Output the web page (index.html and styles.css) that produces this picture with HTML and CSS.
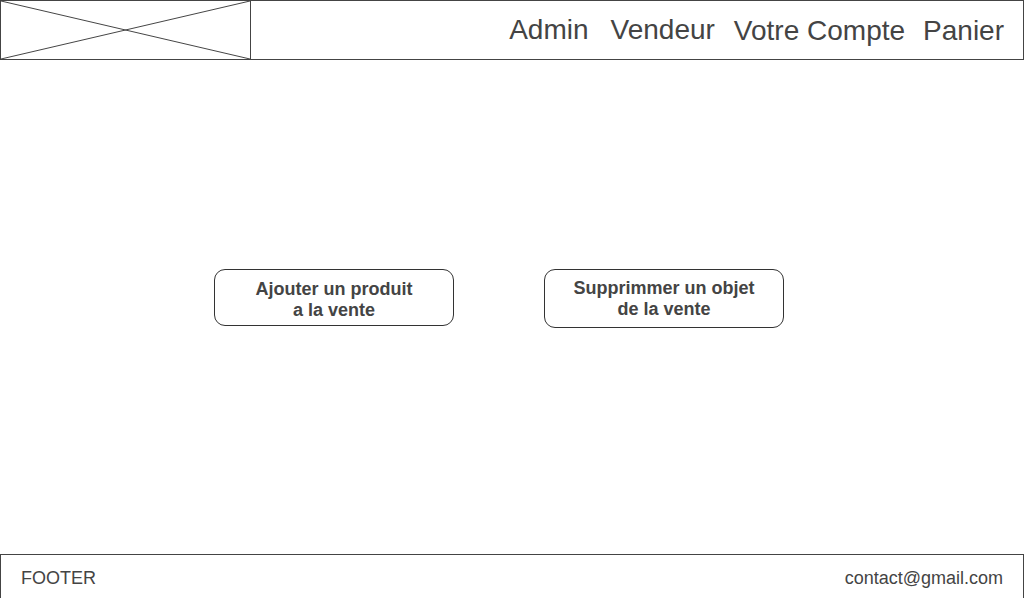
FILE: index.html
```html
<!DOCTYPE html>
<html lang="fr">
<head>
<meta charset="utf-8">
<title>Vendeur</title>
<link rel="stylesheet" href="styles.css">
</head>
<body>
<div class="page">
  <header class="header">
    <div class="logo">
      <svg class="logo-x" width="250" height="58" viewBox="0 0 250 58" preserveAspectRatio="none">
        <line x1="0" y1="0" x2="250" y2="58" stroke="#444" stroke-width="1"/>
        <line x1="0" y1="58" x2="250" y2="0" stroke="#444" stroke-width="1"/>
      </svg>
    </div>
    <nav class="nav">
      <a class="nav-item nav-admin">Admin</a>
      <a class="nav-item nav-vendeur">Vendeur</a>
      <a class="nav-item nav-compte">Votre Compte</a>
      <a class="nav-item nav-panier">Panier</a>
    </nav>
  </header>
  <main class="main">
    <button class="btn btn-add">Ajouter un produit<br>a la vente</button>
    <button class="btn btn-del">Supprimmer un objet<br>de la vente</button>
  </main>
  <footer class="footer">
    <span class="footer-label">FOOTER</span>
    <span class="footer-mail">contact@gmail.com</span>
  </footer>
</div>
</body>
</html>
```
FILE: styles.css
```css
html, body {
  margin: 0;
  padding: 0;
  background: #fff;
  overflow: hidden;
}
body {
  font-family: "Liberation Sans", Arial, sans-serif;
  color: #444;
}
.page {
  width: 1024px;
  height: 600px;
  display: flex;
  flex-direction: column;
}
.header {
  box-sizing: border-box;
  height: 60px;
  border: 1px solid #444;
  display: flex;
  align-items: stretch;
}
.logo {
  width: 249px;
  border-right: 1px solid #444;
  display: flex;
}
.logo-x {
  display: block;
  width: 249px;
  height: 58px;
}
.nav {
  flex: 1;
  display: flex;
  justify-content: flex-end;
  align-items: flex-start;
  padding-right: 19px;
}
.nav-item {
  font-size: 28px;
  line-height: 32px;
  color: #444;
  text-decoration: none;
}
.nav-admin { margin-top: 13px; }
.nav-vendeur { margin-top: 13px; margin-left: 22px; }
.nav-compte { margin-top: 14px; margin-left: 19px; }
.nav-panier { margin-top: 14px; margin-left: 18px; }
.main {
  flex: 1;
  display: flex;
  align-items: flex-start;
  padding-top: 209px;
  padding-left: 214px;
  gap: 90px;
}
.btn {
  box-sizing: border-box;
  width: 240px;
  background: #fff;
  border: 1px solid #333;
  border-radius: 11px;
  font-family: "Liberation Sans", Arial, sans-serif;
  font-weight: bold;
  font-size: 18px;
  line-height: 21px;
  color: #444;
  padding: 0;
  margin: 0;
  display: flex;
  align-items: center;
  justify-content: center;
  text-align: center;
}
.btn-add { height: 57px; padding-top: 4px; }
.btn-del { height: 59px; }
.footer {
  box-sizing: border-box;
  height: 46px;
  flex: none;
  border: 1px solid #444;
  display: flex;
  align-items: flex-start;
  justify-content: space-between;
  padding: 12px 20px 0 20px;
  font-size: 18px;
  line-height: 22px;
  color: #444;
}
```
